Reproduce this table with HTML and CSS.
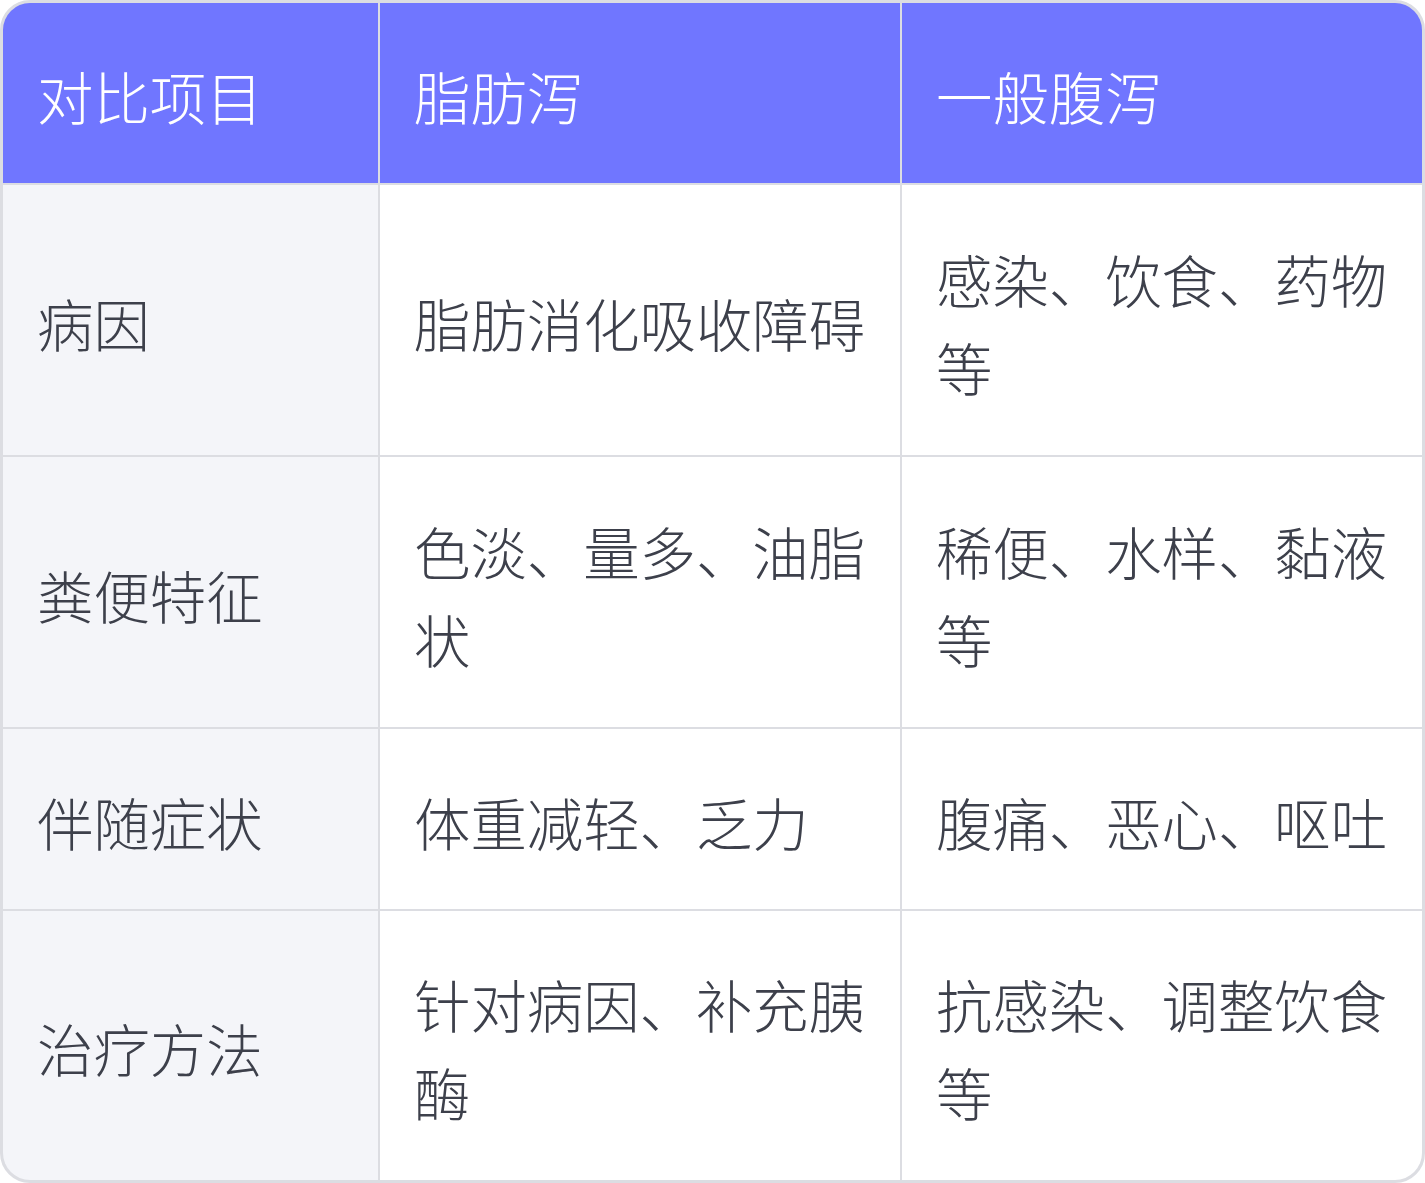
FILE: index.html
```html
<!DOCTYPE html>
<html lang="zh-CN">
<head>
<meta charset="utf-8">
<title>脂肪泻与一般腹泻对比</title>
<link rel="stylesheet" href="styles.css">
</head>
<body>
<div class="table">
  <div class="cell head">对比项目</div>
  <div class="cell head">脂肪泻</div>
  <div class="cell head">一般腹泻</div>

  <div class="cell label">病因</div>
  <div class="cell">脂肪消化吸收障碍</div>
  <div class="cell">感染、饮食、药物等</div>

  <div class="cell label">粪便特征</div>
  <div class="cell">色淡、量多、油脂状</div>
  <div class="cell">稀便、水样、黏液等</div>

  <div class="cell label">伴随症状</div>
  <div class="cell">体重减轻、乏力</div>
  <div class="cell">腹痛、恶心、呕吐</div>

  <div class="cell label">治疗方法</div>
  <div class="cell">针对病因、补充胰酶</div>
  <div class="cell">抗感染、调整饮食等</div>
</div>
</body>
</html>
```

FILE: styles.css
```css
html, body {
  margin: 0;
  padding: 0;
  background: #ffffff;
}

.table {
  box-sizing: border-box;
  width: 1425px;
  height: 1183px;
  border: 3px solid #dcdde2;
  border-radius: 30px;
  overflow: hidden;
  display: grid;
  grid-template-columns: 375px 520px 520px;
  grid-template-rows: 180px 270px 270px 180px 1fr;
  gap: 2px;
  background: #dcdde2;
  font-family: "Noto Sans CJK SC", "Noto Sans", sans-serif;
  font-size: 56.4px;
  font-weight: 300;
  line-height: 88px;
  color: #3d404b;
}

.cell {
  background: #ffffff;
  padding: 5px 32px 0 34px;
  display: flex;
  align-items: center;
}

.head {
  background: #7076ff;
  color: #ffffff;
}

.label {
  background: #f4f5f9;
}
```
